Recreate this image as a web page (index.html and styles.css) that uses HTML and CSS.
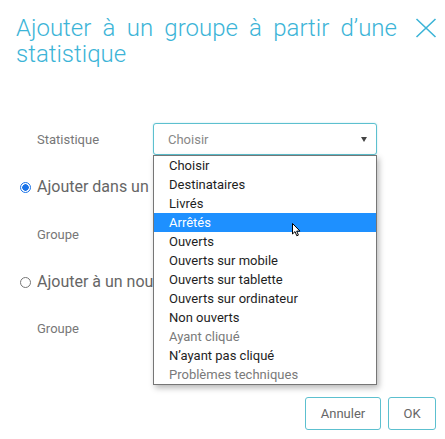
FILE: index.html
```html
<!DOCTYPE html>
<html lang="fr">
<head>
<meta charset="utf-8">
<title>Ajouter à un groupe</title>
<link rel="stylesheet" href="styles.css">
</head>
<body>
<div class="dialog">
  <header class="head">
    <h1 class="title">Ajouter à un groupe à partir d’une statistique</h1>
    <button class="close" type="button" aria-label="Fermer">
      <svg width="22" height="20" viewBox="0 0 22 20"><path d="M1.5 1 L20.5 19 M20.5 1 L1.5 19" stroke="#3cb4d7" stroke-width="1.6" fill="none"/></svg>
    </button>
  </header>
  <form class="form">
    <div class="row">
      <label class="label">Statistique</label>
      <div class="field">
        <div class="select select-focus"><span class="select-text">Choisir</span><span class="caret"></span></div>
        <ul class="menu">
          <li class="opt">Choisir</li>
          <li class="opt">Destinataires</li>
          <li class="opt">Livrés</li>
          <li class="opt opt-active">Arrêtés</li>
          <li class="opt">Ouverts</li>
          <li class="opt">Ouverts sur mobile</li>
          <li class="opt">Ouverts sur tablette</li>
          <li class="opt">Ouverts sur ordinateur</li>
          <li class="opt">Non ouverts</li>
          <li class="opt opt-disabled">Ayant cliqué</li>
          <li class="opt">N’ayant pas cliqué</li>
          <li class="opt opt-disabled">Problèmes techniques</li>
        </ul>
        <svg class="cursor" width="9" height="14" viewBox="0 0 9 14"><path d="M0.5 0.5 L0.5 11 L3 8.6 L4.8 12.8 L6.4 12.1 L4.7 8.1 L8 8.1 Z" fill="#fff" stroke="#000" stroke-width="1"/></svg>
      </div>
    </div>
    <div class="radio-row r1">
      <span class="radio radio-on"></span><span class="radio-text">Ajouter dans un groupe existant</span>
    </div>
    <div class="row r2">
      <label class="label">Groupe</label>
      <div class="field"><div class="select"><span class="caret"></span></div></div>
    </div>
    <div class="radio-row r3">
      <span class="radio"></span><span class="radio-text">Ajouter à un nouveau groupe</span>
    </div>
    <div class="row r4">
      <label class="label">Groupe</label>
      <div class="field"><div class="select"></div></div>
    </div>
  </form>
  <footer class="foot">
    <button class="btn btn-cancel" type="button">Annuler</button>
    <button class="btn btn-ok" type="button">OK</button>
  </footer>
</div>
</body>
</html>
```
FILE: styles.css
```css
html, body {
  margin: 0;
  padding: 0;
  background: #fff;
}
.dialog {
  width: 445px;
  height: 439px;
  font-family: Roboto, "Liberation Sans", sans-serif;
  overflow: hidden;
}
.head {
  display: flex;
  justify-content: space-between;
  align-items: flex-start;
  padding: 15px 8px 0 16px;
}
.title {
  margin: 0;
  font-weight: 300;
  font-size: 24px;
  line-height: 26px;
  word-spacing: 5.4px;
  color: #3cb4d7;
  max-width: 395px;
}
.close {
  border: 0;
  background: none;
  padding: 0;
  margin-top: 3px;
  width: 22px;
  height: 20px;
  display: block;
}
.close svg { display: block; }
.form {
  padding-left: 16px;
  margin-top: 56px;
}
.row {
  display: grid;
  grid-template-columns: 137px 224px;
  align-items: center;
  height: 32px;
}
.label {
  padding-left: 21px;
  font-size: 13px;
  color: #777;
}
.field {
  position: relative;
  height: 32px;
}
.select {
  box-sizing: border-box;
  height: 32px;
  border: 1px solid #5cc0cf;
  border-radius: 3px;
  display: flex;
  align-items: center;
  justify-content: space-between;
  padding: 0 9px 0 14px;
  background: #fff;
}
.select-focus {
  box-shadow: 0 0 2px rgba(60, 180, 200, 0.35);
}
.select-text {
  font-size: 13px;
  color: #888;
}
.caret {
  width: 0;
  height: 0;
  border-left: 3.5px solid transparent;
  border-right: 3.5px solid transparent;
  border-top: 5px solid #444;
}
.menu {
  position: absolute;
  z-index: 5;
  left: 0;
  top: 32px;
  width: 224px;
  box-sizing: border-box;
  margin: 0;
  padding: 0;
  list-style: none;
  background: #fff;
  border: 1px solid #767676;
  box-shadow: 2px 3px 6px rgba(0, 0, 0, 0.28);
}
.opt {
  height: 19px;
  line-height: 19px;
  padding-left: 15px;
  font-size: 13px;
  color: #1e1e1e;
}
.opt-active {
  background: #1e90ff;
  color: #fff;
}
.opt-disabled {
  color: #7a7a7a;
}
.cursor {
  position: absolute;
  z-index: 6;
  left: 139px;
  top: 100px;
}
.radio-row {
  display: flex;
  align-items: center;
  height: 32px;
  padding-left: 4px;
  gap: 6px;
  white-space: nowrap;
}
.r1 { margin-top: 16px; }
.r2 { margin-top: 15px; }
.r3 { margin-top: 16px; }
.r4 { margin-top: 14px; }
.radio {
  box-sizing: border-box;
  width: 11px;
  height: 11px;
  border-radius: 50%;
  border: 1px solid #767676;
  background: #fff;
  flex: none;
}
.radio-on {
  border: 1.5px solid #1a73e8;
  background: radial-gradient(circle, #1a73e8 0 3px, #fff 3.5px);
}
.radio-text {
  display: block;
  width: 116px;
  overflow: hidden;
  font-size: 16px;
  line-height: 20px;
  color: #666;
}
.foot {
  display: flex;
  justify-content: flex-end;
  gap: 7px;
  padding-right: 9px;
  margin-top: 53px;
}
.btn {
  box-sizing: border-box;
  height: 33px;
  border: 1px solid #5cc0cf;
  border-radius: 3px;
  background: #fff;
  font-family: Roboto, "Liberation Sans", sans-serif;
  font-size: 13px;
  color: #666;
  padding: 0;
}
.btn-cancel { width: 76px; }
.btn-ok { width: 48px; }
```
